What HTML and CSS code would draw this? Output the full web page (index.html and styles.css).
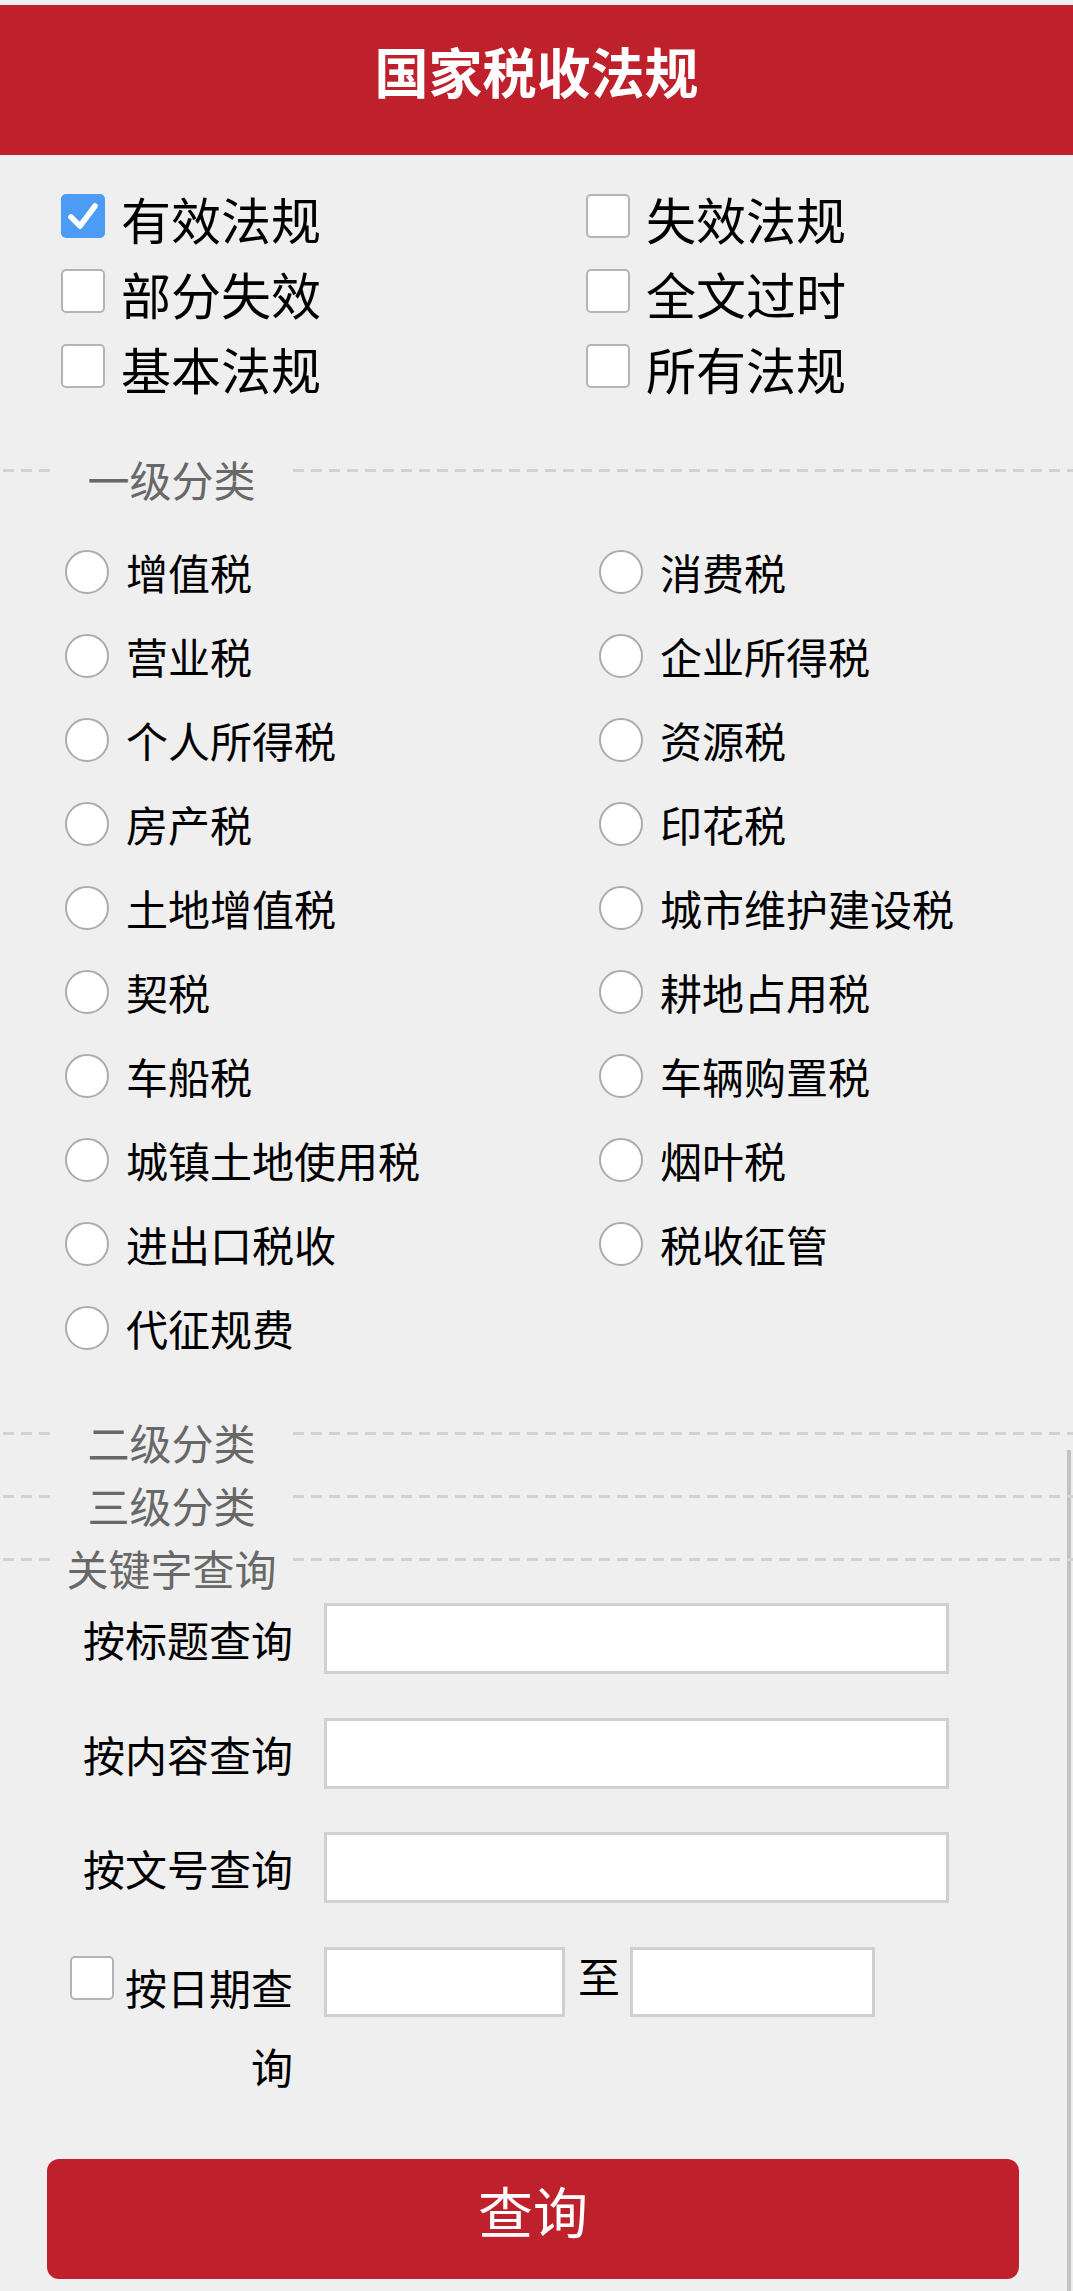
FILE: index.html
```html
<!DOCTYPE html>
<html lang="zh-CN">
<head>
<meta charset="utf-8">
<title>国家税收法规</title>
<link rel="stylesheet" href="styles.css">
</head>
<body>
<header class="top">国家税收法规</header>

<div class="checks">
  <label class="chk"><span class="cb on"><svg viewBox="0 0 44 44" width="44" height="44"><path d="M10 23 L19 32 L34 12" fill="none" stroke="#fff" stroke-width="5.5" stroke-linecap="round" stroke-linejoin="round"/></svg></span>有效法规</label>
  <label class="chk"><span class="cb"></span>失效法规</label>
  <label class="chk"><span class="cb"></span>部分失效</label>
  <label class="chk"><span class="cb"></span>全文过时</label>
  <label class="chk"><span class="cb"></span>基本法规</label>
  <label class="chk"><span class="cb"></span>所有法规</label>
</div>

<div class="sec-title first"><span>一级分类</span></div>

<div class="radios">
  <label class="rad"><span class="rb"></span>增值税</label>
  <label class="rad"><span class="rb"></span>消费税</label>
  <label class="rad"><span class="rb"></span>营业税</label>
  <label class="rad"><span class="rb"></span>企业所得税</label>
  <label class="rad"><span class="rb"></span>个人所得税</label>
  <label class="rad"><span class="rb"></span>资源税</label>
  <label class="rad"><span class="rb"></span>房产税</label>
  <label class="rad"><span class="rb"></span>印花税</label>
  <label class="rad"><span class="rb"></span>土地增值税</label>
  <label class="rad"><span class="rb"></span>城市维护建设税</label>
  <label class="rad"><span class="rb"></span>契税</label>
  <label class="rad"><span class="rb"></span>耕地占用税</label>
  <label class="rad"><span class="rb"></span>车船税</label>
  <label class="rad"><span class="rb"></span>车辆购置税</label>
  <label class="rad"><span class="rb"></span>城镇土地使用税</label>
  <label class="rad"><span class="rb"></span>烟叶税</label>
  <label class="rad"><span class="rb"></span>进出口税收</label>
  <label class="rad"><span class="rb"></span>税收征管</label>
  <label class="rad"><span class="rb"></span>代征规费</label>
</div>

<div class="lower">
  <div class="sec-title"><span>二级分类</span></div>
  <div class="sec-title"><span>三级分类</span></div>
  <div class="sec-title"><span>关键字查询</span></div>

  <div class="form">
    <div class="lbl">按标题查询</div>
    <div class="field"><span class="inp wide"></span></div>
    <div class="lbl">按内容查询</div>
    <div class="field"><span class="inp wide"></span></div>
    <div class="lbl">按文号查询</div>
    <div class="field"><span class="inp wide"></span></div>
    <div class="lbl date"><span class="cb small"></span>按日期查询</div>
    <div class="field dates"><span class="inp d1"></span><span class="to">至</span><span class="inp d2"></span></div>
  </div>

  <div class="btn-wrap"><button class="btn" type="button">查询</button></div>
</div>
</body>
</html>
```

FILE: styles.css
```css
html, body {
  margin: 0;
  padding: 0;
}
body {
  background: #efefef;
  font-family: "Noto Sans CJK SC", "Noto Sans", sans-serif;
  color: #000;
  padding-top: 5px;
  width: 1073px;
}

.top {
  height: 150px;
  background: #be212b;
  color: #fff;
  font-size: 54px;
  font-weight: 700;
  text-align: center;
  line-height: 132px;
}

/* status checkboxes */
.checks {
  display: grid;
  grid-template-columns: 525px 1fr;
  grid-auto-rows: 75px;
  padding: 25px 0 0 61px;
}
.chk {
  display: flex;
  align-items: center;
  font-size: 50px;
  line-height: 60px;
}
.cb {
  box-sizing: border-box;
  width: 44px;
  height: 44px;
  flex: none;
  border: 2px solid #b4b4b4;
  border-radius: 5px;
  background: #fff;
  margin: 0 16px 4px 0;
  display: inline-block;
}
.cb.on {
  background: #4c9bf5;
  border-color: #4c9bf5;
  position: relative;
}
.cb.on svg {
  display: block;
  margin: -2px;
}

/* section titles */
.sec-title {
  display: flex;
  align-items: flex-start;
  height: 63px;
  line-height: 63px;
  font-size: 42px;
  color: #686868;
}
.sec-title::before,
.sec-title::after {
  content: "";
  height: 3px;
  margin-top: 22px;
  background: repeating-linear-gradient(to right, #d2d2d2 0 11px, transparent 11px 18px);
}
.sec-title::before {
  width: 50px;
  flex: none;
  background-position: 3px 0;
}
.sec-title::after {
  flex: 1;
}
.sec-title span {
  width: 243px;
  flex: none;
  text-align: center;
  white-space: nowrap;
}
.sec-title.first {
  margin-top: 42px;
}

/* radio grid */
.radios {
  display: grid;
  grid-template-columns: 534px 1fr;
  grid-auto-rows: 84px;
  padding-left: 65px;
  margin-top: 20px;
}
.rad {
  display: flex;
  align-items: center;
  font-size: 42px;
  line-height: 60px;
}
.rb {
  box-sizing: border-box;
  width: 44px;
  height: 44px;
  flex: none;
  border: 2.5px solid #acacac;
  border-radius: 50%;
  background: #fff;
  margin-right: 17px;
}

/* lower part with right rule */
.lower {
  margin-top: 40px;
  padding-bottom: 12px;
  background: linear-gradient(#c3c3c3, #c3c3c3) no-repeat right 2px top 40px / 4px calc(100% - 40px);
}

.form {
  display: grid;
  grid-template-columns: 230px 625px;
  column-gap: 31px;
  row-gap: 43.5px;
  padding-left: 63px;
  margin-top: 4px;
}
.lbl {
  font-size: 42px;
  line-height: 71px;
  text-align: right;
  white-space: nowrap;
}
.lbl.date {
  line-height: 79px;
  white-space: normal;
}
.cb.small {
  margin: 0 11px 0 0;
  vertical-align: 5px;
}
.field {
  display: flex;
  align-items: flex-start;
}
.inp {
  box-sizing: border-box;
  height: 71px;
  background: #fff;
  border: 3px solid #d0d0d0;
  display: block;
}
.inp.wide {
  width: 625px;
}
.inp.d1 {
  width: 241px;
  height: 70px;
}
.inp.d2 {
  width: 245px;
  height: 70px;
}
.to {
  font-size: 42px;
  line-height: 56px;
  margin: 0 10px 0 13px;
}

.btn-wrap {
  margin-top: 54px;
  padding-left: 47px;
}
.btn {
  display: block;
  width: 972px;
  height: 120px;
  border: 0;
  border-radius: 12px;
  background: #be212b;
  color: #fff;
  font-family: "Noto Sans CJK SC", "Noto Sans", sans-serif;
  font-size: 55px;
  line-height: 101px;
  padding: 0 0 19px;
  text-align: center;
}
```
